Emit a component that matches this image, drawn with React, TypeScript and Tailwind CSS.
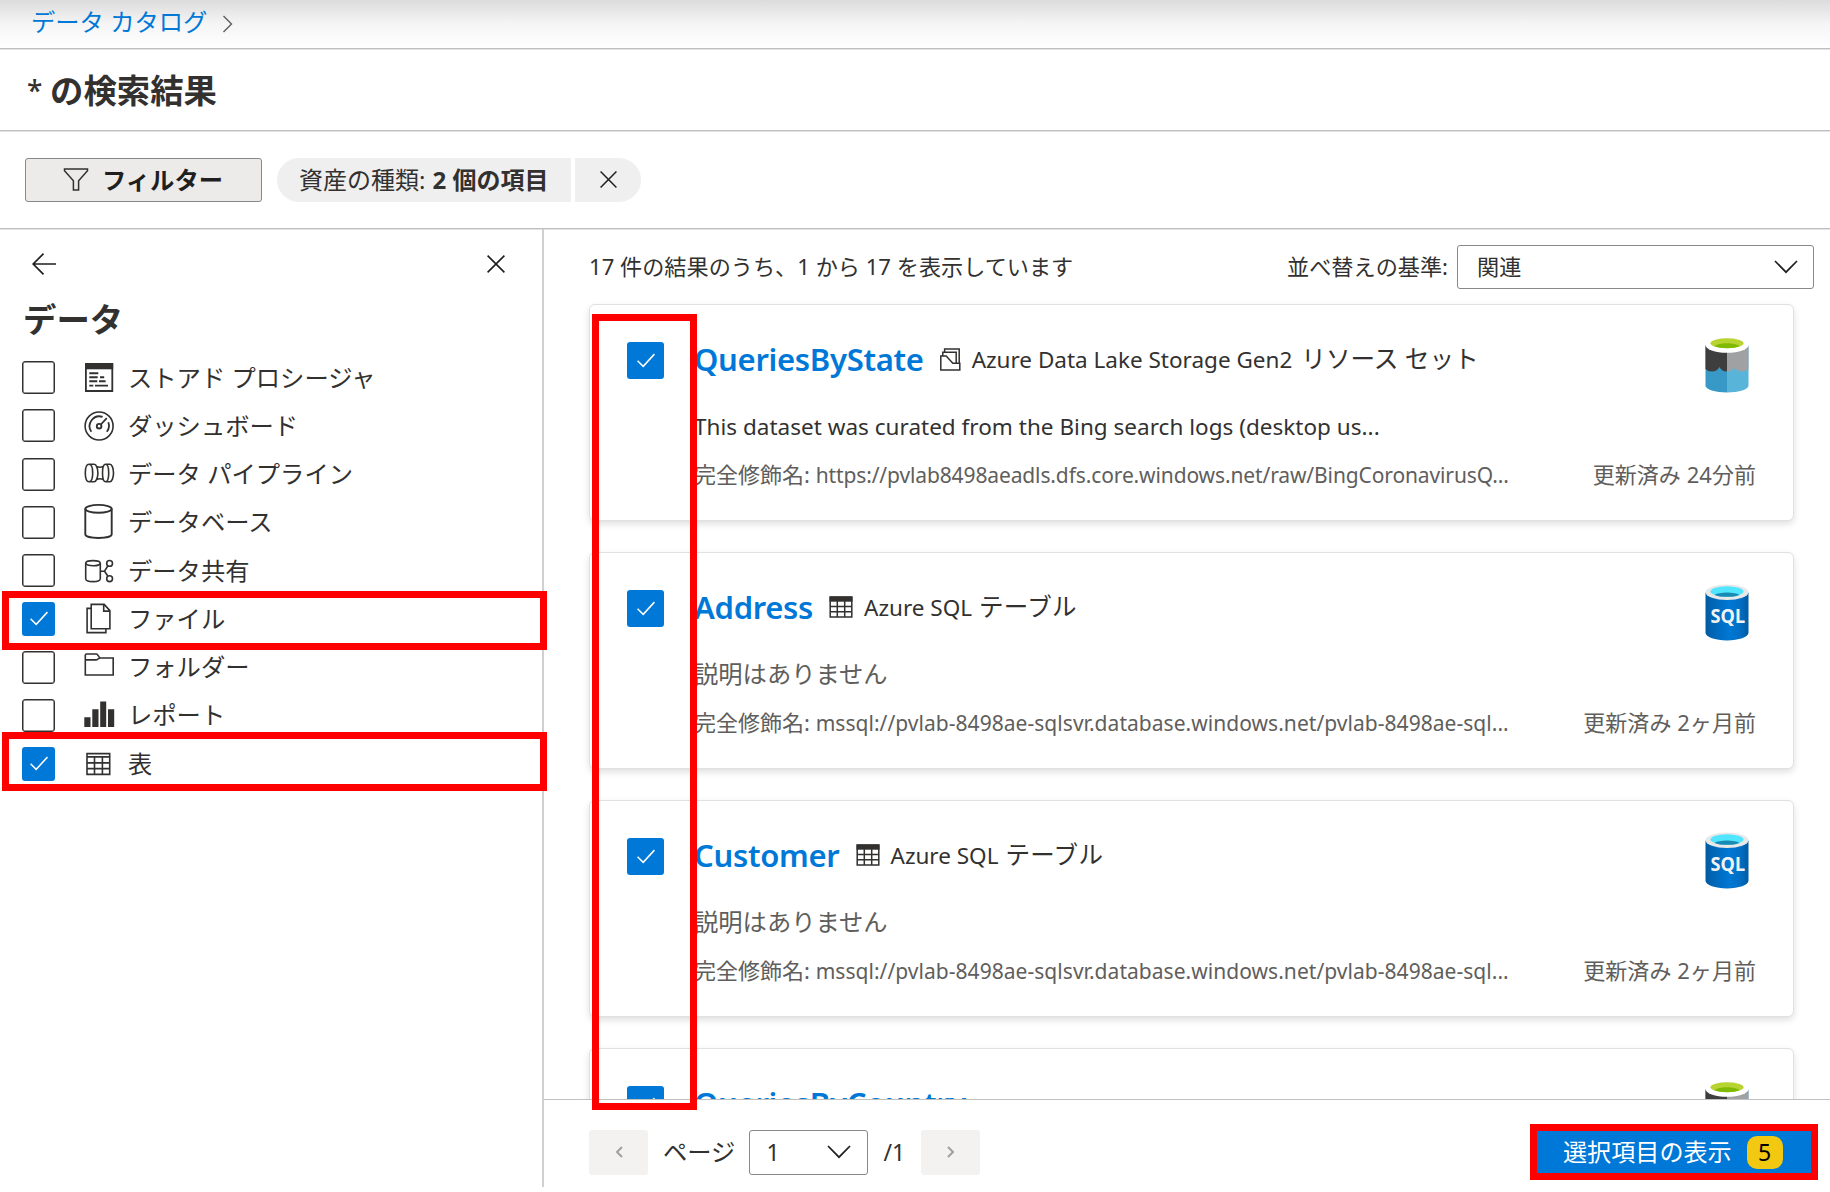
import type { ReactNode } from "react";

const INK = "#323130";

function Check({ className }: { className: string }) {
  return (
    <svg className={className} viewBox="0 0 20 16" fill="none" stroke="#fff" strokeWidth="1.6">
      <path d="M1 8.2 7 14.2 19 1.2" />
    </svg>
  );
}

function Cross({ className }: { className: string }) {
  return (
    <svg className={className} viewBox="0 0 18 18" fill="none" stroke="#201f1e" strokeWidth="1.6">
      <path d="M.6.6 17.4 17.4M17.4.6.6 17.4" />
    </svg>
  );
}

function ChevronDown({ className }: { className: string }) {
  return (
    <svg className={className} viewBox="0 0 24 14" fill="none" stroke="#201f1e" strokeWidth="1.7">
      <path d="M1 1 12 12.2 23 1" />
    </svg>
  );
}

function ListIcon({ children }: { children: ReactNode }) {
  return (
    <svg
      className="ml-[29px] h-[34px] w-8 shrink-0 overflow-visible"
      viewBox="0 0 32 34"
      fill="none"
      stroke={INK}
      strokeWidth="1.6"
    >
      {children}
    </svg>
  );
}

const icons = {
  procedure: (
    <ListIcon>
      <path d="M1.9 3h26.4v27H1.9z" strokeWidth="1.8" />
      <path d="M1 2.3h28.2v6H1z" fill={INK} stroke="none" />
      <path d="M5.3 12.3h9M5.3 16.2h8.4M16 16.2h4.2M5.3 20.2h8M15 20.2h6.6M5.3 24.6h4M11 24.6h13" strokeWidth="1.9" />
    </ListIcon>
  ),
  dashboard: (
    <ListIcon>
      <circle cx="15.1" cy="17" r="14" />
      <circle cx="15.1" cy="17.2" r="2.3" strokeWidth="1.9" />
      <path d="m16.8 15.5 6-6.4M7.4 22.8A9.8 9.8 0 0 1 18.6 7.9M24.3 13.2a9.8 9.8 0 0 1-1.5 9.6" strokeWidth="1.8" />
    </ListIcon>
  ),
  pipeline: (
    <ListIcon>
      <path d="M5 7.3C2.6 7.3 1.3 11.3 1.3 16s1.3 8.7 3.7 8.7 3.7-4 3.7-8.7S7.400 7.300 5 7.300h5.200c2 0 3.700 4 3.700 8.700s-1.700 8.700-3.700 8.700H5M21.600 7.300c-2 0-3.100 4-3.100 8.700s1.100 8.700 3.100 8.700 3.100-4 3.100-8.700-1.100-8.700-3.100-8.700h4.300c2 0 3.600 4 3.600 8.700s-1.600 8.700-3.600 8.700h-4.300M12.700 9.600c2 .9 4.400.9 6.400 0M12.700 22.400c2-.9 4.400-.9 6.400 0" />
    </ListIcon>
  ),
  database: (
    <ListIcon>
      <ellipse cx="14.500" cy="3.800" rx="13.200" ry="3.900" strokeWidth="1.900" />
      <path d="M1.300 3.800v25.500c0 2.200 5.900 3.700 13.200 3.700s13.200-1.500 13.200-3.700V3.800" strokeWidth="1.900" />
    </ListIcon>
  ),
  share: (
    <ListIcon>
      <ellipse cx="9" cy="9.200" rx="7.300" ry="2.600" />
      <path d="M1.700 9.200v15.600c0 1.600 3.300 2.800 7.300 2.800s7.300-1.200 7.300-2.800V9.200M16.300 17.200h4.200l3.300-5.200M20.500 17.200l3.300 4.800" />
      <circle cx="25.600" cy="9.400" r="2.900" />
      <circle cx="25.600" cy="24.700" r="2.900" />
    </ListIcon>
  ),
  file: (
    <ListIcon>
      <path d="M7.200 2.400h13L25.900 8.600v18.100H7.200zM19.700 2.400v6.700h6.200M7 6.400H3.100v24.200h18.800v-3.700" />
    </ListIcon>
  ),
  folder: (
    <ListIcon>
      <path d="M1.300 5.300c0-.8.500-1.300 1.300-1.300h9.900c1.400 0 2.400 4 3.900 4h12.800v17H1.300zM1.300 9.900h10.900c1.300 0 2.200-1.900 4.200-1.900" />
    </ListIcon>
  ),
  report: (
    <ListIcon>
      <path d="M.3 19.300h6.200v9.700H.3zM8.300 11.300h6.200V29H8.300zM16.200 3.500h6V29h-6zM24 11.300h6.200V29H24z" fill={INK} stroke="none" />
    </ListIcon>
  ),
  table: (
    <ListIcon>
      <path d="M3 6.600h22.700v20.800H3zM3 9.900h22.700M3 15.900h22.700M3 21.600h22.700M10.500 9.900v17.500M18.400 9.900v17.500" />
    </ListIcon>
  ),
};

const assetTypes: { label: string; icon: ReactNode; checked?: boolean }[] = [
  { label: "ストアド プロシージャ", icon: icons.procedure },
  { label: "ダッシュボード", icon: icons.dashboard },
  { label: "データ パイプライン", icon: icons.pipeline },
  { label: "データベース", icon: icons.database },
  { label: "データ共有", icon: icons.share },
  { label: "ファイル", icon: icons.file, checked: true },
  { label: "フォルダー", icon: icons.folder },
  { label: "レポート", icon: icons.report },
  { label: "表", icon: icons.table, checked: true },
];

function TableGlyph() {
  return (
    <svg className="h-[22px] w-[24px]" viewBox="0 0 24 22" fill="none" stroke={INK} strokeWidth="1.500">
      <path d="M1.200 1h21.600v20H1.200zM1 10.500h22M1 15.700h22M8.300 5v16M15.700 5v16" />
      <path d="M.5.500h23v5.200H.5z" fill={INK} stroke="none" />
    </svg>
  );
}

function ResourceSetGlyph() {
  return (
    <svg className="h-[23px] w-[21px]" viewBox="0 0 21 23" fill="none" stroke={INK} strokeWidth="1.500">
      <path d="M.8 8h5.400l6.600 7.200h7V22H.8zM2.800 8V4.200h13.400v11M4.600 4.200V1h14.600v14.200" />
    </svg>
  );
}

function DataLakeLogo() {
  return (
    <svg className="h-[57px] w-[44px] shrink-0" viewBox="0 0 44 57">
      <path d="M.5 9h21.500v46.500C10 55.500.5 52.500.5 48.500z" fill="#3999c6" />
      <path d="M43.500 9H22v46.500c12 0 21.500-3 21.500-7z" fill="#59b4d9" />
      <path d="M.5 8H22v26.500c-3.500 0-6-1.200-7.500-4.500-1.800 3-4.200 4.500-7.500 4.500-2.600 0-4.800-.8-6.500-2.500z" fill="#3e3e3e" />
      <path d="M43.500 8H22v26.500c3.300 0 6.200-1.500 7.500-3.500 1.800 2.200 4.300 3.500 7.500 3.500 2.600 0 5-1 6.500-2.500z" fill="#a0a1a2" />
      <ellipse cx="22" cy="7.800" rx="21.700" ry="8" fill="#fff" />
      <ellipse cx="22" cy="6.200" rx="16.500" ry="5" fill="#b8d432" />
      <path d="M9.500 9.200c2-1.800 7-3 12.500-3s10.500 1.200 12.500 3c-2.500 1.300-7.200 2-12.500 2s-10-.7-12.500-2z" fill="#7fba00" />
    </svg>
  );
}

function SqlLogo({ id }: { id: string }) {
  return (
    <svg className="h-[57px] w-[44px] shrink-0 -translate-y-px" viewBox="0 0 44 57">
      <defs>
        <linearGradient id={id}>
          <stop offset="0" stopColor="#005ba1" />
          <stop offset=".2" stopColor="#0067b8" />
          <stop offset=".55" stopColor="#0078d4" />
          <stop offset=".8" stopColor="#006fc6" />
          <stop offset="1" stopColor="#005ba1" />
        </linearGradient>
      </defs>
      <path d="M.5 8.500v40.300c0 4.200 9.700 7.700 21.500 7.700s21.500-3.500 21.500-7.700V8.500z" fill={`url(#${id})`} />
      <ellipse cx="22" cy="8.200" rx="21.500" ry="7.700" fill="#e8e8e8" />
      <ellipse cx="22" cy="7.500" rx="16.500" ry="5.200" fill="#50e6ff" />
      <path d="M9.500 10.900c2.500-1.400 7-2.300 12.500-2.300s10 .9 12.500 2.300c-2.800 1.200-7.300 1.900-12.500 1.900s-9.700-.7-12.500-1.900z" fill="#198ab3" />
      <text x="22.800" y="38.800" textAnchor="middle" textLength="34.500" lengthAdjust="spacingAndGlyphs" className="font-['Noto_Sans'] text-[19.500px] font-bold" fill="#f2f2f2">
        SQL
      </text>
    </svg>
  );
}

type AssetDetails = {
  type: ReactNode;
  glyph: ReactNode;
  description: ReactNode;
  path: ReactNode;
  updated: string;
};

type Asset = { name: string; logo: ReactNode; details?: AssetDetails };

const sqlDetails: AssetDetails = {
  type: (
    <>
      <span className="text-[22.500px]">Azure SQL</span>
      <span className="ml-[7px] text-[24.500px] tracking-[0.3px]">テーブル</span>
    </>
  ),
  glyph: <TableGlyph />,
  description: <span className="text-[24.300px] text-[#605e5c]">説明はありません</span>,
  path: (
    <span className="text-[21px] tracking-[0.040px]">
      mssql://pvlab-8498ae-sqlsvr.database.windows.net/pvlab-8498ae-sql...
    </span>
  ),
  updated: "更新済み 2ヶ月前",
};

const assets: Asset[] = [
  {
    name: "QueriesByState",
    logo: <DataLakeLogo />,
    details: {
      type: (
        <>
          <span className="text-[22.500px]">Azure Data Lake Storage Gen2</span>
          <span className="ml-[9px] text-[24.600px]">リソース セット</span>
        </>
      ),
      glyph: <ResourceSetGlyph />,
      description: (
        <span className="text-[22.500px] leading-[34px] tracking-[0.020px]">
          This dataset was curated from the Bing search logs (desktop us...
        </span>
      ),
      path: (
        <span className="text-[21px] tracking-[-0.120px]">
          https://pvlab8498aeadls.dfs.core.windows.net/raw/BingCoronavirusQ...
        </span>
      ),
      updated: "更新済み 24分前",
    },
  },
  { name: "Address", logo: <SqlLogo id="sql-address" />, details: sqlDetails },
  { name: "Customer", logo: <SqlLogo id="sql-customer" />, details: sqlDetails },
  { name: "QueriesByCountry", logo: <DataLakeLogo /> },
];

function AssetCard({ asset: { name, logo, details } }: { asset: Asset }) {
  return (
    <article className="flex h-[217px] w-[1205px] shrink-0 rounded-md border border-[#e1e1e1] bg-white pl-[37px] shadow-[0_3px_7px_rgba(0,0,0,0.13)]">
      <span className="mt-[37px] flex size-[37px] shrink-0 items-center justify-center rounded-[3px] bg-[#0078d7]">
        <Check className="h-[15px] w-[20px]" />
      </span>
      <div className="ml-[30px] flex grow flex-col pt-[34px] pr-[37px] whitespace-nowrap">
        <div className="flex h-10 items-center">
          <h3 className="text-[31px] leading-10 font-semibold tracking-[-0.3px] text-[#0078d7]">{name}</h3>
          {details && (
            <>
              <span className="ml-4">{details.glyph}</span>
              <span className="ml-[11px] flex items-baseline leading-10">{details.type}</span>
            </>
          )}
          <span className="mt-[12px] mr-[7px] ml-auto">{logo}</span>
        </div>
        {details && (
          <>
            <p className="mt-[31px] h-8 leading-8">{details.description}</p>
            <div className="mt-4 flex h-8 items-center justify-between text-[22px] leading-8 text-[#605e5c]">
              <span>完全修飾名: {details.path}</span>
              <span className="tracking-[0.050px]">{details.updated}</span>
            </div>
          </>
        )}
      </div>
    </article>
  );
}

export default function App() {
  return (
    <div className="relative flex h-[1192px] w-[1830px] flex-col overflow-hidden bg-white font-['Noto_Sans','Noto_Sans_CJK_JP',sans-serif] text-[#323130]">
      <nav className="flex h-[49px] shrink-0 items-center border-b border-[#bfbfbe] bg-linear-to-b from-[#dcdcdc] via-[#f5f5f5] to-white pb-[5px] pl-[31px] text-[24.300px] shadow-[0_1px_0_#e3e3e2]">
        <a className="leading-8 text-[#0078d7]">データ カタログ</a>
        <svg className="ml-[15px] h-[18px] w-[11px] translate-y-0.5" viewBox="0 0 11 18" fill="none" stroke="#605e5c" strokeWidth="1.400">
          <path d="M1.500 1 9.500 9l-8 8" />
        </svg>
      </nav>

      <header className="flex h-[82px] shrink-0 items-center border-b border-[#bfbfbe] pl-[27px] text-[33.400px] leading-10 font-bold shadow-[0_1px_0_#e3e3e2]">
        <h1 className="flex">
          <span className="w-[23px] text-[28px] font-medium">*</span>
          <span>の検索結果</span>
        </h1>
      </header>

      <section className="flex h-[98px] shrink-0 items-center border-b border-[#bfbfbe] pl-[25px] text-[24px] leading-8 shadow-[0_1px_0_#e3e3e2]">
        <button className="flex h-[44px] w-[237px] items-center rounded-[3px] border-[1.500px] border-[#8a8886] bg-[#edebe9] pl-[37px] font-bold text-[#201f1e]">
          <svg className="h-[23px] w-[26px]" viewBox="0 0 26 23" fill="none" stroke="#323130" strokeWidth="1.500">
            <path d="M1.500 1h23v1.800L15.600 12.700V22h-5.200v-9.300L1.500 2.800z" />
          </svg>
          <span className="ml-[13px] text-[24.300px]">フィルター</span>
        </button>
        <div className="ml-[15px] flex h-[44px] items-center rounded-l-full bg-[#efefef] pl-[22px]">
          <span>資産の種類:</span>
          <b className="ml-[7px] w-[139px]">2 個の項目</b>
        </div>
        <button className="ml-1 flex h-[44px] w-[66px] items-center rounded-r-full bg-[#efefef] pl-[25px]">
          <Cross className="size-[17px]" />
        </button>
      </section>

      <div className="flex h-[958px] shrink-0">
        <aside className="w-[544px] shrink-0 border-r-2 border-[#d0d0cf]">
          <div className="flex h-[70px] items-center justify-between pr-[37px] pl-8">
            <svg className="h-[22px] w-6" viewBox="0 0 24 22" fill="none" stroke="#201f1e" strokeWidth="1.700">
              <path d="M24 11H1.200M11.500.7 1.200 11l10.300 10.300" />
            </svg>
            <Cross className="size-[18px]" />
          </div>
          <h2 className="pl-[23px] text-[33.400px] leading-10 font-bold">データ</h2>
          <ul className="mt-[14.500px]">
            {assetTypes.map((t) => (
              <li key={t.label} className="flex h-[48.250px] items-center pl-[22px] text-[24.300px]">
                {t.checked ? (
                  <span className="flex h-[34px] w-[33px] shrink-0 items-center justify-center rounded-[3px] bg-[#0078d7]">
                    <Check className="h-[15px] w-[20px]" />
                  </span>
                ) : (
                  <span className="h-[33px] w-[33px] shrink-0 rounded-[3px] border-[1.500px] border-[#323130] shadow-[inset_0_0_0_0.500px_#323130]" />
                )}
                {t.icon}
                <span className="ml-3 leading-8">{t.label}</span>
              </li>
            ))}
          </ul>
        </aside>

        <main className="flex min-w-0 grow flex-col">
          <div className="flex h-[870px] shrink-0 flex-col overflow-hidden pt-[15px] pl-[45px]">
            <div className="flex h-[45px] shrink-0 items-center pr-4 text-[22.150px] leading-8">
              <p className="pb-0.5">17 件の結果のうち、1 から 17 を表示しています</p>
              <span className="ml-auto pb-0.5">並べ替えの基準:</span>
              <div className="ml-[9px] flex h-[44px] w-[357px] items-center justify-between rounded-[3px] border-[1.500px] border-[#8a8886] pr-[15px] pl-[19px]">
                <span className="pb-0.5">関連</span>
                <ChevronDown className="h-[14px] w-6" />
              </div>
            </div>
            <div className="mt-[15px] flex flex-col gap-[31px]">
              {assets.map((a) => (
                <AssetCard key={a.name} asset={a} />
              ))}
            </div>
          </div>

          <footer className="flex h-[88px] shrink-0 items-center border-t-[1.500px] border-[#c0c0bf] pt-[17px] pl-[45px] text-[24px] leading-8">
            <button className="flex h-[45px] w-[59px] items-center justify-center rounded-[3px] bg-[#f3f2f1]">
              <svg className="h-[12px] w-[8px]" viewBox="0 0 8 12" fill="none" stroke="#a19f9d" strokeWidth="2">
                <path d="M7 1 2 6l5 5" />
              </svg>
            </button>
            <span className="ml-[15px] text-[24.300px]">ページ</span>
            <div className="ml-[14px] flex h-[45px] w-[119px] items-center justify-between rounded-[3px] border-[1.500px] border-[#8a8886] pr-4 pl-4 text-[23px]">
              <span>1</span>
              <ChevronDown className="h-[14px] w-[24px]" />
            </div>
            <span className="ml-[15px] text-[23px]">/1</span>
            <button className="ml-4 flex h-[45px] w-[59px] items-center justify-center rounded-[3px] bg-[#f3f2f1]">
              <svg className="h-[12px] w-[8px]" viewBox="0 0 8 12" fill="none" stroke="#a19f9d" strokeWidth="2">
                <path d="m1 1 5 5-5 5" />
              </svg>
            </button>
            <button className="mr-[12px] ml-auto flex h-[56px] w-[288px] items-center border-7 border-[#ff0000] bg-[#0078d7] pl-[26px] text-white">
              <span className="text-[24.100px]">選択項目の表示</span>
              <span className="ml-[15px] flex h-[33px] w-9 items-center justify-center rounded-[10px] bg-[#f2c811] text-[23px] text-black">5</span>
            </button>
          </footer>
        </main>
      </div>

      {/* Highlight frames drawn over the page */}
      <div className="pointer-events-none absolute top-[591px] left-[2px] h-[59px] w-[545px] border-7 border-[#ff0000]" />
      <div className="pointer-events-none absolute top-[732px] left-[2px] h-[59px] w-[545px] border-7 border-[#ff0000]" />
      <div className="pointer-events-none absolute top-[314px] left-[592px] h-[796px] w-[105px] border-7 border-[#ff0000]" />
    </div>
  );
}
